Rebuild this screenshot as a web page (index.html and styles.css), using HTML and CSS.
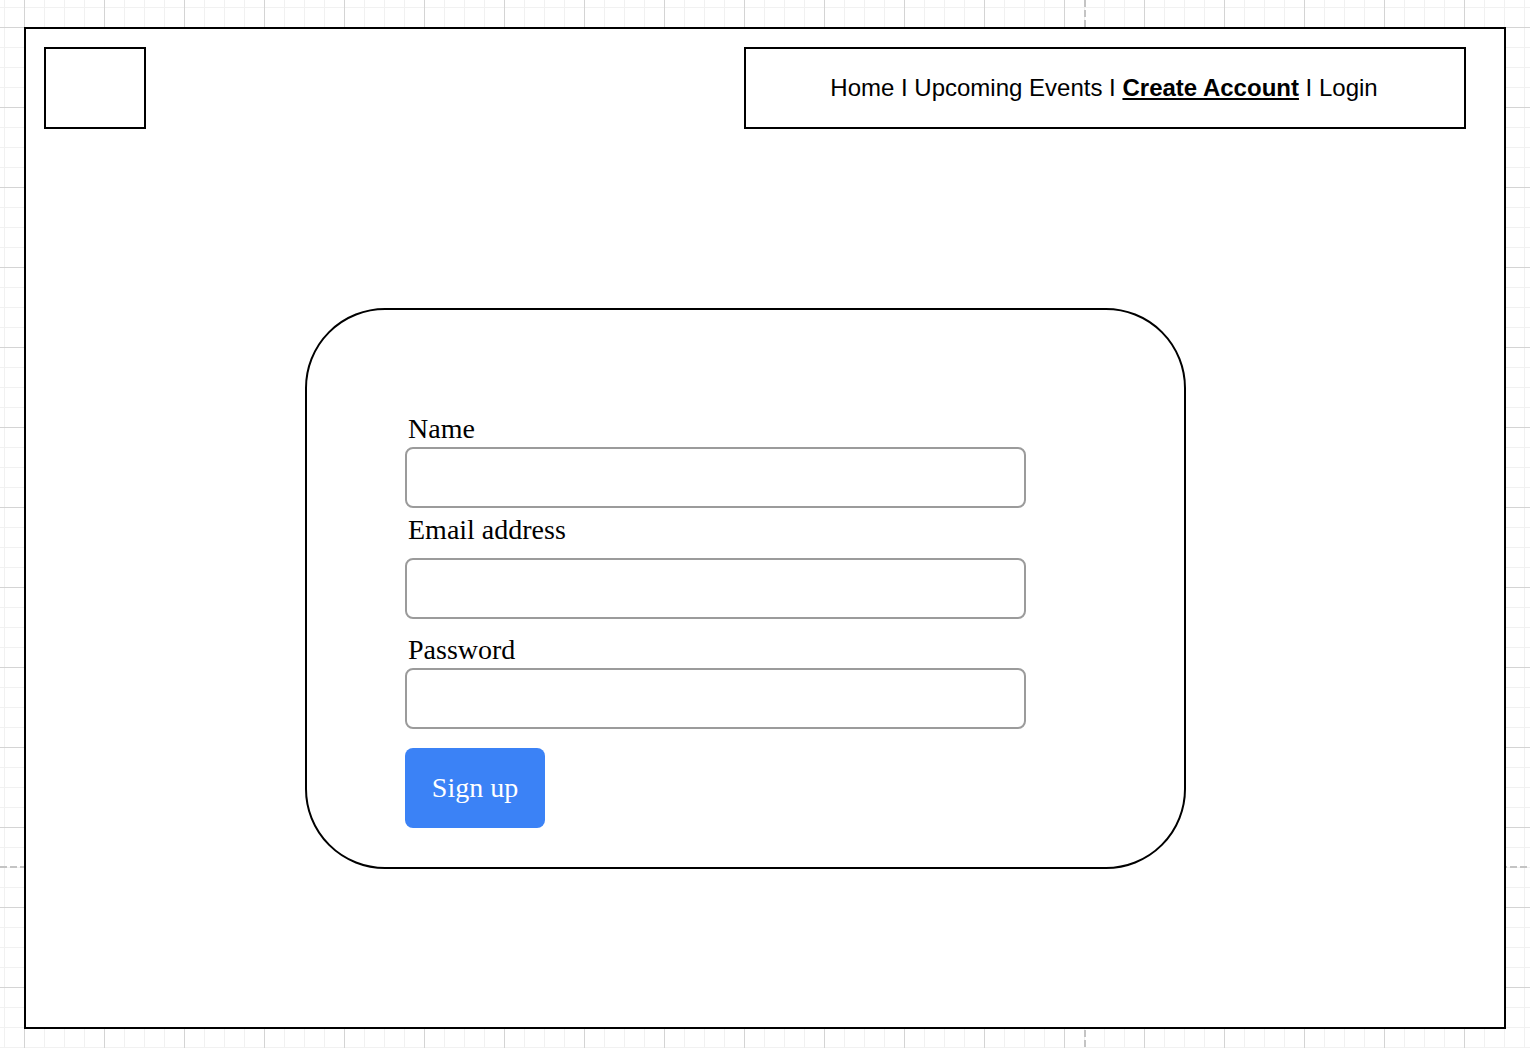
FILE: index.html
```html
<!DOCTYPE html>
<html lang="en">
<head>
<meta charset="utf-8">
<title>Create Account</title>
<link rel="stylesheet" href="styles.css">
</head>
<body>
<div class="frame">
  <header class="header">
    <div class="logo"></div>
    <nav class="nav">
      <a class="nav-link" href="#">Home</a> I <a class="nav-link" href="#">Upcoming Events</a> I <a class="nav-link active" href="#">Create Account</a> I <a class="nav-link" href="#">Login</a>
    </nav>
  </header>
  <main class="card">
    <form class="form">
      <label class="label label-name" for="name">Name</label>
      <input class="input" id="name" type="text">
      <label class="label label-email" for="email">Email address</label>
      <input class="input" id="email" type="email">
      <label class="label label-password" for="password">Password</label>
      <input class="input" id="password" type="password">
      <button class="btn" type="button">Sign up</button>
    </form>
  </main>
</div>
</body>
</html>
```
FILE: styles.css
```css
html, body {
  margin: 0;
  padding: 0;
}

body {
  width: 1530px;
  height: 1048px;
  overflow: hidden;
  position: relative;
  background-color: #ffffff;
  background-image:
    linear-gradient(to right, #d4d4d4 1px, transparent 1px),
    linear-gradient(to bottom, #d4d4d4 1px, transparent 1px),
    linear-gradient(to right, #f1f1f1 1px, transparent 1px),
    linear-gradient(to bottom, #f1f1f1 1px, transparent 1px);
  background-size: 80px 100%, 100% 80px, 20px 100%, 100% 20px;
  background-position: 24px 0, 0 27px, 4px 0, 0 7px;
  font-family: "Liberation Sans", Arial, sans-serif;
}

body::before {
  content: "";
  position: absolute;
  top: 0;
  bottom: 0;
  left: 1084px;
  width: 2px;
  background: repeating-linear-gradient(to bottom, #c4c4c4 0 7px, transparent 7px 10px);
}

body::after {
  content: "";
  position: absolute;
  left: 0;
  right: 0;
  top: 866px;
  height: 2px;
  background: repeating-linear-gradient(to right, #c4c4c4 0 7px, transparent 7px 10px);
}

.frame {
  position: relative;
  z-index: 1;
  box-sizing: border-box;
  width: 1482px;
  height: 1002px;
  margin: 27px 0 0 24px;
  border: 2px solid #000;
  background: #fff;
  padding: 18px 38px 0 18px;
}

.header {
  display: flex;
  justify-content: space-between;
  align-items: flex-start;
}

.logo {
  box-sizing: border-box;
  width: 102px;
  height: 82px;
  border: 2px solid #000;
}

.nav {
  box-sizing: border-box;
  width: 722px;
  height: 82px;
  border: 2px solid #000;
  display: flex;
  align-items: center;
  justify-content: center;
  white-space: pre;
  font-size: 24px;
  color: #000;
  padding-right: 2px;
}

.nav-link {
  color: #000;
  text-decoration: none;
}

.nav-link.active {
  font-weight: bold;
  text-decoration: underline;
}

.card {
  box-sizing: border-box;
  width: 881px;
  height: 561px;
  margin: 179px 0 0 261px;
  border: 2px solid #000;
  border-radius: 80px;
  padding: 103px 0 0 98px;
}

.form {
  display: flex;
  flex-direction: column;
  align-items: flex-start;
}

.label {
  font-family: "Liberation Serif", "Times New Roman", serif;
  font-size: 28px;
  line-height: 32px;
  color: #000;
  margin-left: 3px;
}

.label-name {
  margin-bottom: 2px;
}

.label-email {
  margin-top: 6px;
  margin-bottom: 12px;
}

.label-password {
  margin-top: 15px;
  margin-bottom: 2px;
}

.input {
  box-sizing: border-box;
  width: 621px;
  height: 61px;
  margin: 0;
  border: 2px solid #9b9b9b;
  border-radius: 8px;
  background: #fff;
  outline: none;
}

.btn {
  box-sizing: border-box;
  width: 140px;
  height: 80px;
  margin-top: 19px;
  border: none;
  border-radius: 8px;
  background: #3b82f6;
  color: #fff;
  font-family: "Liberation Serif", "Times New Roman", serif;
  font-size: 28px;
  padding: 0;
}
```
